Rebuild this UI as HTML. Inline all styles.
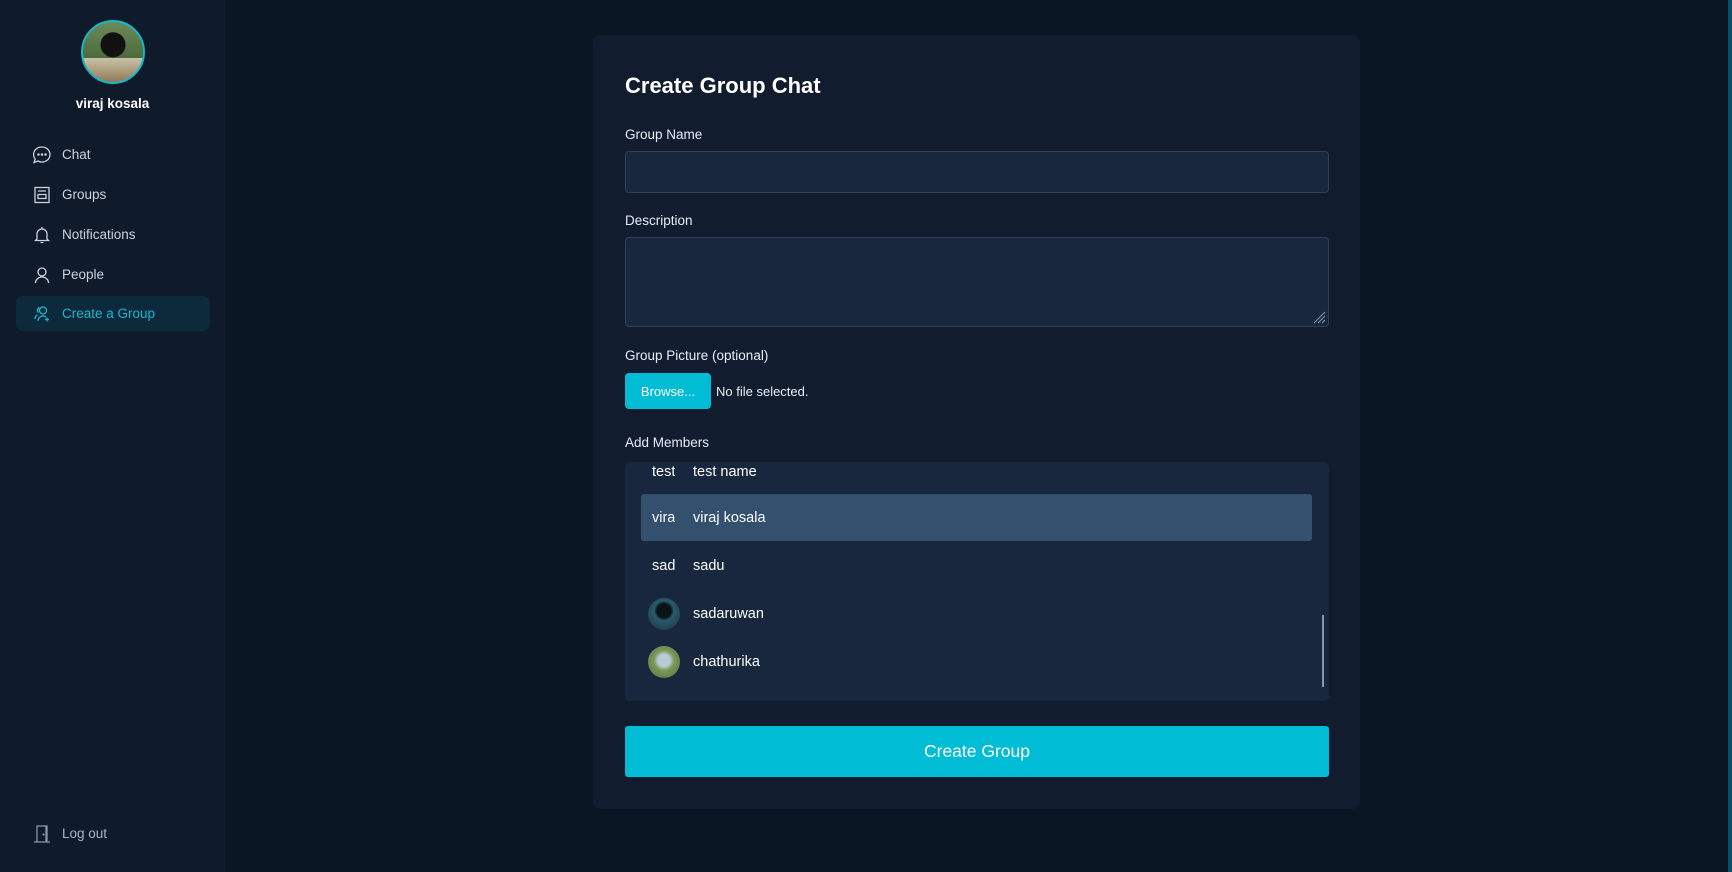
<!DOCTYPE html>
<html><head><style>
*{box-sizing:border-box;margin:0;padding:0}
body{width:1732px;height:872px;background:#0b1625;font-family:"Liberation Sans",sans-serif;position:relative;overflow:hidden;color:#e6edf5}
.sb{position:absolute;left:0;top:0;width:225px;height:872px;background:#0f1a2a}
.av{position:absolute;left:81px;top:20px;width:64px;height:64px;border-radius:50%;border:2px solid #14b8cc;background:radial-gradient(circle at 50% 38%,#111 0 12px,transparent 13px),linear-gradient(#6b8a5a,#4d6a3a 60%,#c9c2a8 60%,#8f7a55);}
.nm{position:absolute;left:0;width:225px;top:96px;text-align:center;font-weight:bold;font-size:13.5px;color:#fff}
.nav{position:absolute;left:16px;width:194px;height:35px;display:flex;align-items:center;font-size:13.5px;color:#cbd3dc;border-radius:7px}
.nav svg{position:absolute;left:16px}
.nav span{position:absolute;left:46px}
.nav.act{background:#0d2a3d;color:#16b7d0}
.card{position:absolute;left:593px;top:35px;width:767px;height:774px;background:#111c2e;border-radius:8px}
.t{position:absolute;left:625px;top:73px;font-size:22px;font-weight:bold;color:#fff}
.l{position:absolute;left:625px;font-size:13.5px;color:#e6edf5}
.in{position:absolute;left:625px;width:704px;background:#18273d;border:1px solid #2f4058;border-radius:4px}
.btn{position:absolute;left:625px;top:373px;width:86px;height:36px;background:#00bcd4;border-radius:4px;color:#fff;font-size:13px;display:flex;align-items:center;justify-content:center}
.list{position:absolute;left:625px;top:462px;width:704px;height:239px;background:#18273d;border-radius:5px;overflow:hidden}
.row{position:absolute;left:16px;width:671px;height:47px;font-size:14.5px;color:#fff}
.row .a{position:absolute;left:11px;top:50%;transform:translateY(-50%);width:23px;overflow:hidden;white-space:nowrap;font-size:14.5px}
.row .n{position:absolute;left:52px;top:50%;transform:translateY(-50%)}
.create{position:absolute;left:625px;top:726px;width:704px;height:51px;background:#00bcd4;border-radius:3px;color:#fff;font-size:17.5px;display:flex;align-items:center;justify-content:center}
</style></head><body>
<div class="sb">
<div class="av"></div>
<div class="nm">viraj kosala</div>
<div class="nav" style="top:137px"><svg width="20" height="20" viewBox="0 0 20 20" fill="none" stroke="#cbd3dc" stroke-width="1.3"><path d="M10 2a8 7.5 0 1 1-4 14l-4 1.5 1.2-3.5A8 7.5 0 0 1 10 2z"/><circle cx="6.5" cy="9.5" r=".6" fill="#cbd3dc"/><circle cx="10" cy="9.5" r=".6" fill="#cbd3dc"/><circle cx="13.5" cy="9.5" r=".6" fill="#cbd3dc"/></svg><span>Chat</span></div>
<div class="nav" style="top:177px"><svg width="20" height="20" viewBox="0 0 20 20" fill="none" stroke="#cbd3dc" stroke-width="1.3"><rect x="3" y="2.5" width="14" height="15"/><path d="M6 6h8M6 9.5h8v4H6z"/></svg><span>Groups</span></div>
<div class="nav" style="top:217px"><svg width="20" height="20" viewBox="0 0 20 20" fill="none" stroke="#cbd3dc" stroke-width="1.3"><path d="M5 14V9a5 5 0 0 1 10 0v5l1.5 1.5h-13zM8.5 17.5h3M10 2v2"/></svg><span>Notifications</span></div>
<div class="nav" style="top:257px"><svg width="20" height="20" viewBox="0 0 20 20" fill="none" stroke="#cbd3dc" stroke-width="1.3"><circle cx="10" cy="7" r="4"/><path d="M3.5 18a6.5 6 0 0 1 13 0"/></svg><span>People</span></div>
<div class="nav act" style="top:296px"><svg width="20" height="20" viewBox="0 0 20 20" fill="none" stroke="#16b7d0" stroke-width="1.3"><circle cx="11" cy="6.5" r="3.5"/><path d="M6 17a5 5 0 0 1 8-4M7.5 3.5a3 3 0 0 0-1 5M3 15a4 4 0 0 1 2.5-4M15 13.5v4M13 15.5h4"/></svg><span>Create a Group</span></div>
<div class="nav" style="top:816px"><svg width="20" height="20" viewBox="0 0 20 20" fill="none" stroke="#8a96a5" stroke-width="1.3"><path d="M2 18h16M5 18V2h9v16M14 2h1v16"/><circle cx="11.5" cy="10.5" r=".5" fill="#8a96a5"/></svg><span style="color:#aab4c0">Log out</span></div>
</div>
<div style="position:absolute;right:0;top:0;width:4px;height:872px;background:#075068"></div>
<div class="card"></div>
<div class="t">Create Group Chat</div>
<div class="l" style="top:127px">Group Name</div>
<div class="in" style="top:151px;height:42px"></div>
<div class="l" style="top:213px">Description</div>
<div class="in" style="top:237px;height:90px"><svg style="position:absolute;right:2px;bottom:2px" width="14" height="14" stroke="#8a96a5"><path d="M2 13L13 2M6 13L13 6M10 13L13 10"/></svg></div>
<div class="l" style="top:348px">Group Picture (optional)</div>
<div class="btn">Browse...</div>
<div class="l" style="top:384px;left:716px;font-size:13px">No file selected.</div>
<div class="l" style="top:435px">Add Members</div>
<div class="list">
<div class="row" style="top:-14px"><span class="a">test</span><span class="n">test name</span></div>
<div class="row" style="top:32px;background:#34506f;border-radius:3px"><span class="a">viraj</span><span class="n">viraj kosala</span></div>
<div class="row" style="top:80px"><span class="a">sadu</span><span class="n">sadu</span></div>
<div class="row" style="top:128px"><span class="a" style="width:32px;height:32px;left:7px;border-radius:50%;background:radial-gradient(circle at 50% 40%,#0a1418 0 7px,#2a5a6a 10px,#173040)"></span><span class="n">sadaruwan</span></div>
<div class="row" style="top:176px"><span class="a" style="width:32px;height:32px;left:7px;border-radius:50%;background:radial-gradient(circle at 50% 45%,#b8cbd8 0 6px,#7a9a5a 10px,#5a6a3a)"></span><span class="n">chathurika</span></div>
<div style="position:absolute;left:697px;top:153px;width:2px;height:72px;background:#8a96a5"></div>
</div>
<div class="create">Create Group</div>
</body></html>
